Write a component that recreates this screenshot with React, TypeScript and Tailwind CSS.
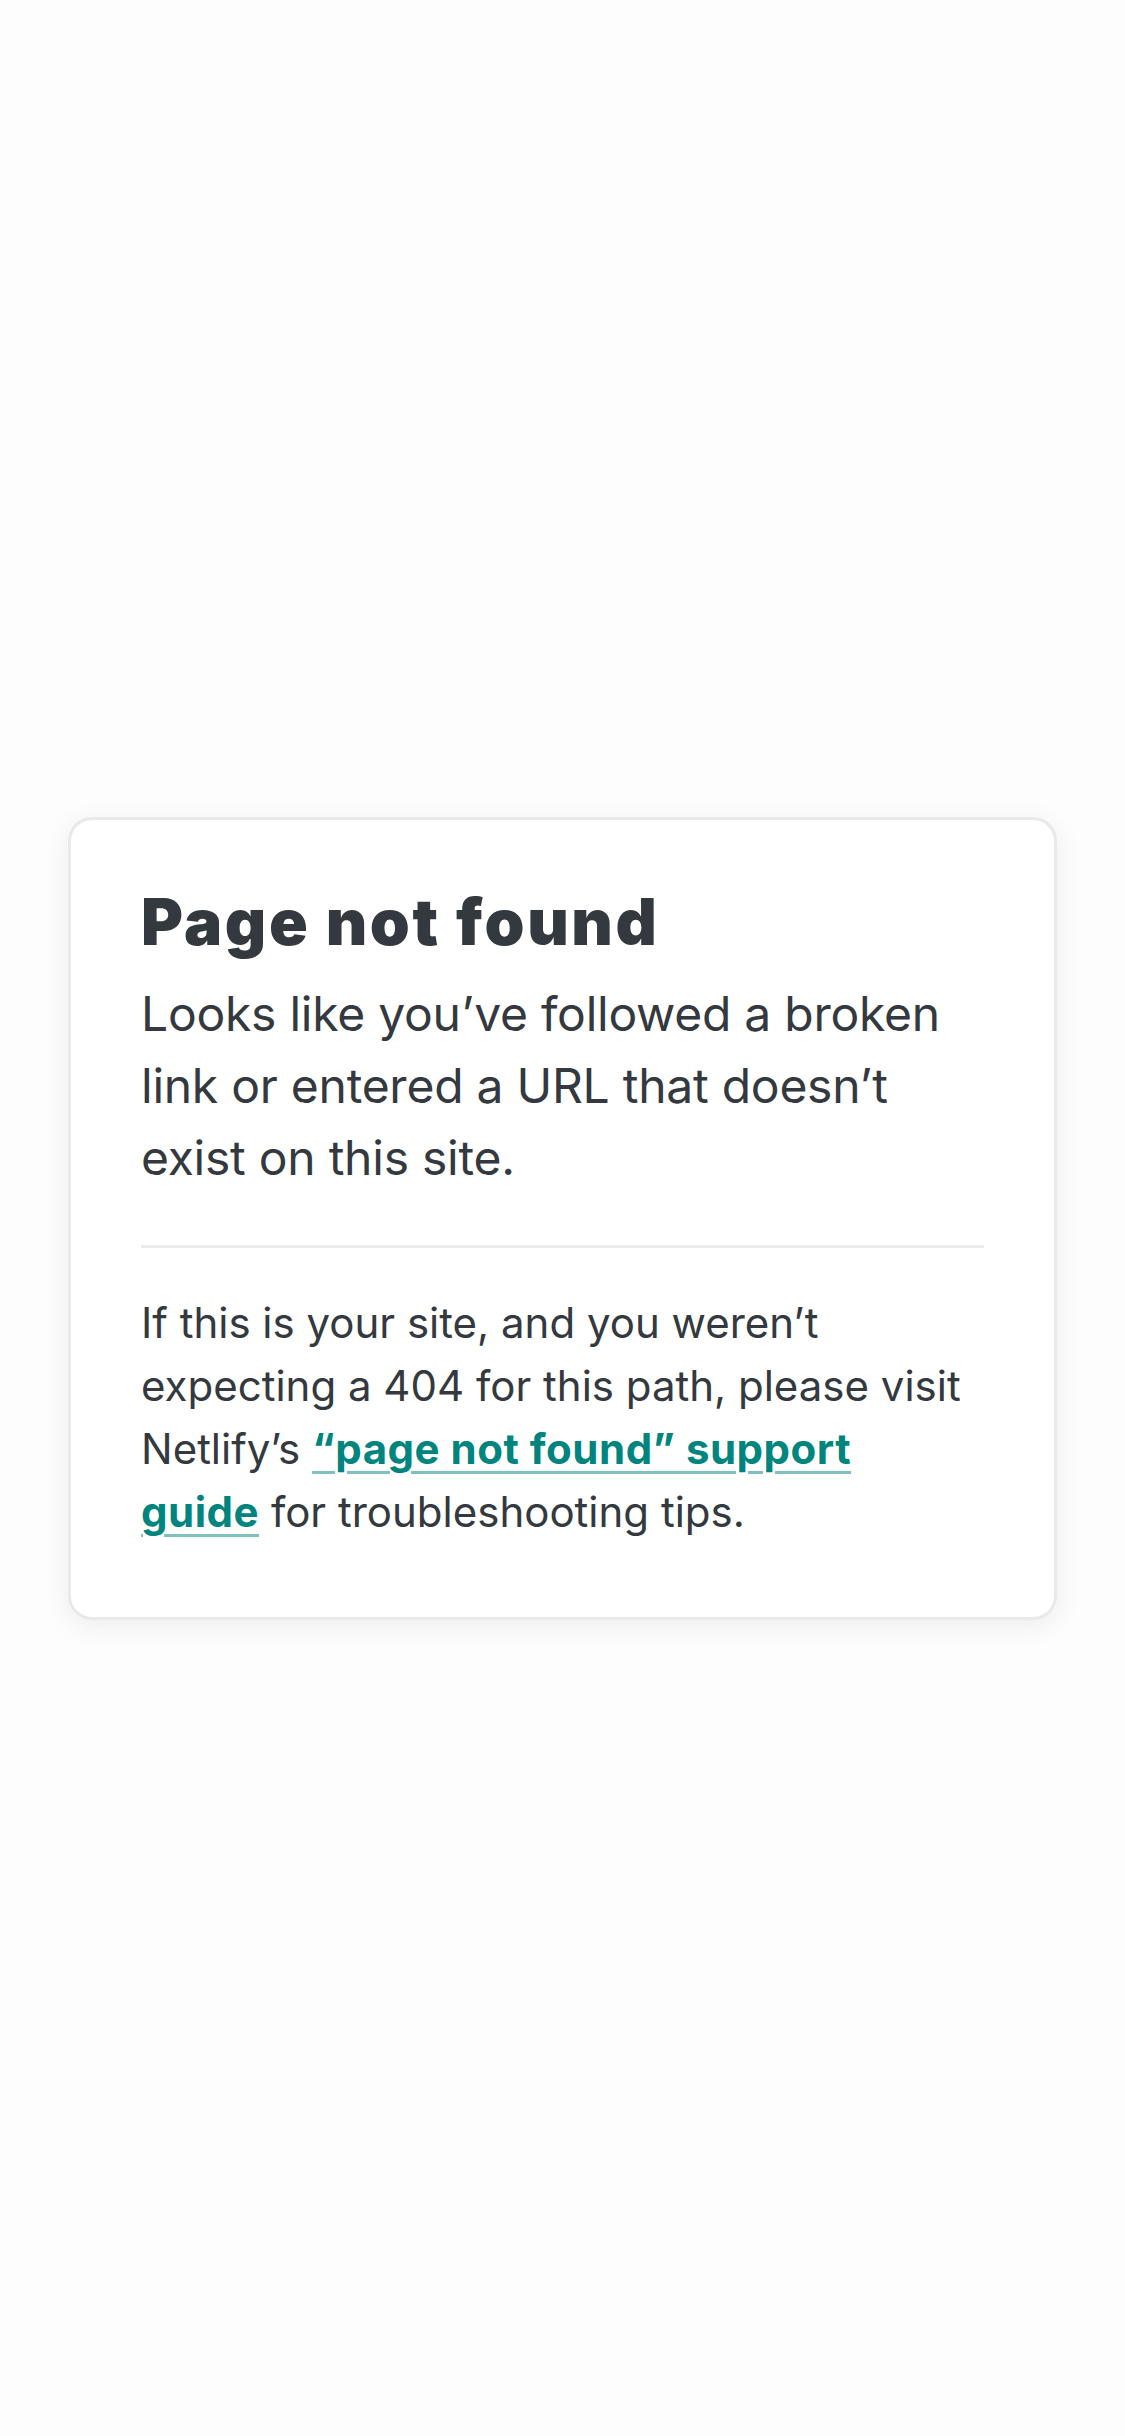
export default function App() {
  return (
    <main className="min-h-screen bg-[#fdfdfd] flex items-center justify-center px-[68px] font-['Inter','Liberation_Sans',sans-serif] text-[#33393e] antialiased">
      <div className="w-full bg-white border-[3px] border-[#e8e9ea] rounded-[24px] shadow-[0_6px_28px_rgba(0,0,0,0.07)] px-[70px] pt-[70px] pb-[74px]">
        <h1 className="text-[64px] leading-[64px] font-black tracking-[2.6px] mb-[24px]">Page not found</h1>
        <p className="text-[48px] leading-[72px] tracking-[-0.25px]">
          Looks like you’ve followed a broken link or entered a URL that doesn’t exist on this site.
        </p>
        <hr className="mt-[51px] border-0 h-[3px] bg-[#ebebeb]" />
        <p className="mt-[43px] text-[42px] leading-[63px]">
          If this is your site, and you weren’t expecting a 404 for this path, please visit Netlify’s{" "}
          <a
            href="#"
            className="font-bold text-[#00847e] tracking-[0.5px] underline decoration-[#7fc1be] decoration-[3px] underline-offset-[7px]"
          >
            “page not found” support
            <br />
            guide
          </a>{" "}
          for troubleshooting tips.
        </p>
      </div>
    </main>
  );
}
